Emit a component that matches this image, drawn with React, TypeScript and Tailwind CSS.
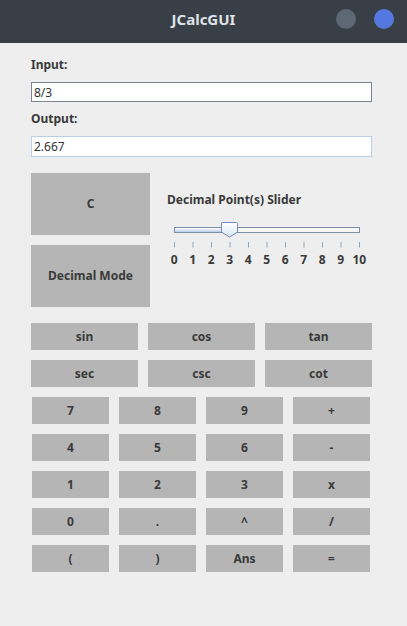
import React, { useState } from 'react'

const fnKeys = ['sin', 'cos', 'tan', 'sec', 'csc', 'cot']
const padKeys = ['7', '8', '9', '+', '4', '5', '6', '-', '1', '2', '3', 'x', '0', '.', '^', '/', '(', ')', 'Ans', '=']
const ticks = [0, 1, 2, 3, 4, 5, 6, 7, 8, 9, 10]

const Key = ({ label, className }: { label: string; className: string }) => (
  <button className={`bg-[#b5b5b5] text-[12px] font-bold text-[#3a3a3a] flex items-center justify-center ${className}`}>
    {label}
  </button>
)

const Slider = ({ value }: { value: number }) => {
  const step = 18.5
  const x = 7 + value * step
  return (
    <div className="flex flex-col">
      <svg width="200" height="28" viewBox="0 0 200 28">
        <defs>
          <linearGradient id="fill" x1="0" y1="0" x2="0" y2="1">
            <stop offset="0" stopColor="#ffffff" />
            <stop offset="1" stopColor="#b9cde6" />
          </linearGradient>
          <linearGradient id="knob" x1="0" y1="0" x2="0" y2="1">
            <stop offset="0" stopColor="#ffffff" />
            <stop offset="1" stopColor="#dbe6f3" />
          </linearGradient>
        </defs>
        <rect x="7.5" y="5.5" width="185" height="5" fill="#f6f6f6" stroke="#7d8da6" />
        <rect x="8" y="6" width={x - 8} height="4" fill="url(#fill)" />
        <path
          d={`M${x - 7} 0.5 H${x + 7} a1 1 0 0 1 1 1 V10 L${x} 15 L${x - 8} 10 V1.5 a1 1 0 0 1 1 -1 Z`}
          fill="url(#knob)"
          stroke="#6f8cc0"
        />
        {ticks.map((t) => (
          <line key={t} x1={7.5 + t * step} x2={7.5 + t * step} y1="20" y2="25.5" stroke="#93a6c2" />
        ))}
      </svg>
      <div className="grid grid-cols-11 w-[203.5px] -ml-[2px] mt-[2px] text-[12px] font-bold text-[#3a3a3a] leading-[16px]">
        {ticks.map((t) => (
          <span key={t} className="text-center">
            {t}
          </span>
        ))}
      </div>
    </div>
  )
}

export default function App() {
  const [input, setInput] = useState('8/3')

  return (
    <div className="w-[407px] h-[626px] bg-[#eeeeee] flex flex-col font-['Noto_Sans',sans-serif] overflow-hidden">
      <header className="h-[43px] shrink-0 bg-[#393f47] flex items-center relative">
        <span className="flex-1 text-center text-[15px] font-bold text-[#dfe3e8] -mt-[5px]">JCalcGUI</span>
        <div className="absolute right-[13px] top-[9px] flex gap-[18px]">
          <span className="w-[20px] h-[20px] rounded-full bg-[#5c6874]" />
          <span className="w-[20px] h-[20px] rounded-full bg-[#5578e0]" />
        </div>
      </header>

      <main className="flex flex-col px-[31px] pt-[12px]">
        <label className="h-[20px] text-[12px] font-bold text-[#3a3a3a] leading-[20px]">Input:</label>
        <input
          value={input}
          onChange={(e) => setInput(e.target.value)}
          className="mt-[7px] h-[20px] w-[341px] bg-white border border-[#7b8694] px-[2px] text-[12px] text-[#333] outline-none"
        />
        <label className="mt-[7px] h-[20px] text-[12px] font-bold text-[#3a3a3a] leading-[20px]">Output:</label>
        <input
          readOnly
          value="2.667"
          className="mt-[7px] h-[21px] w-[341px] bg-white border border-[#b8cfe5] px-[2px] text-[12px] text-[#333] outline-none"
        />

        <div className="mt-[16px] flex">
          <div className="flex flex-col gap-[10px]">
            <Key label="C" className="w-[119px] h-[62px]" />
            <Key label="Decimal Mode" className="w-[119px] h-[62px]" />
          </div>
          <div className="ml-[17px] flex flex-col pt-[19px]">
            <span className="text-[12px] font-bold text-[#3a3a3a] leading-[16px]">Decimal Point(s) Slider</span>
            <div className="mt-[14px]">
              <Slider value={3} />
            </div>
          </div>
        </div>

        <div className="mt-[16px] grid grid-cols-3 gap-x-[10px] gap-y-[10px] w-[341px]">
          {fnKeys.map((k) => (
            <Key key={k} label={k} className="h-[27px]" />
          ))}
        </div>

        <div className="mt-[10px] ml-[1px] grid grid-cols-4 gap-[10px] w-[338px]">
          {padKeys.map((k) => (
            <Key key={k} label={k} className="h-[27px]" />
          ))}
        </div>
      </main>
    </div>
  )
}
